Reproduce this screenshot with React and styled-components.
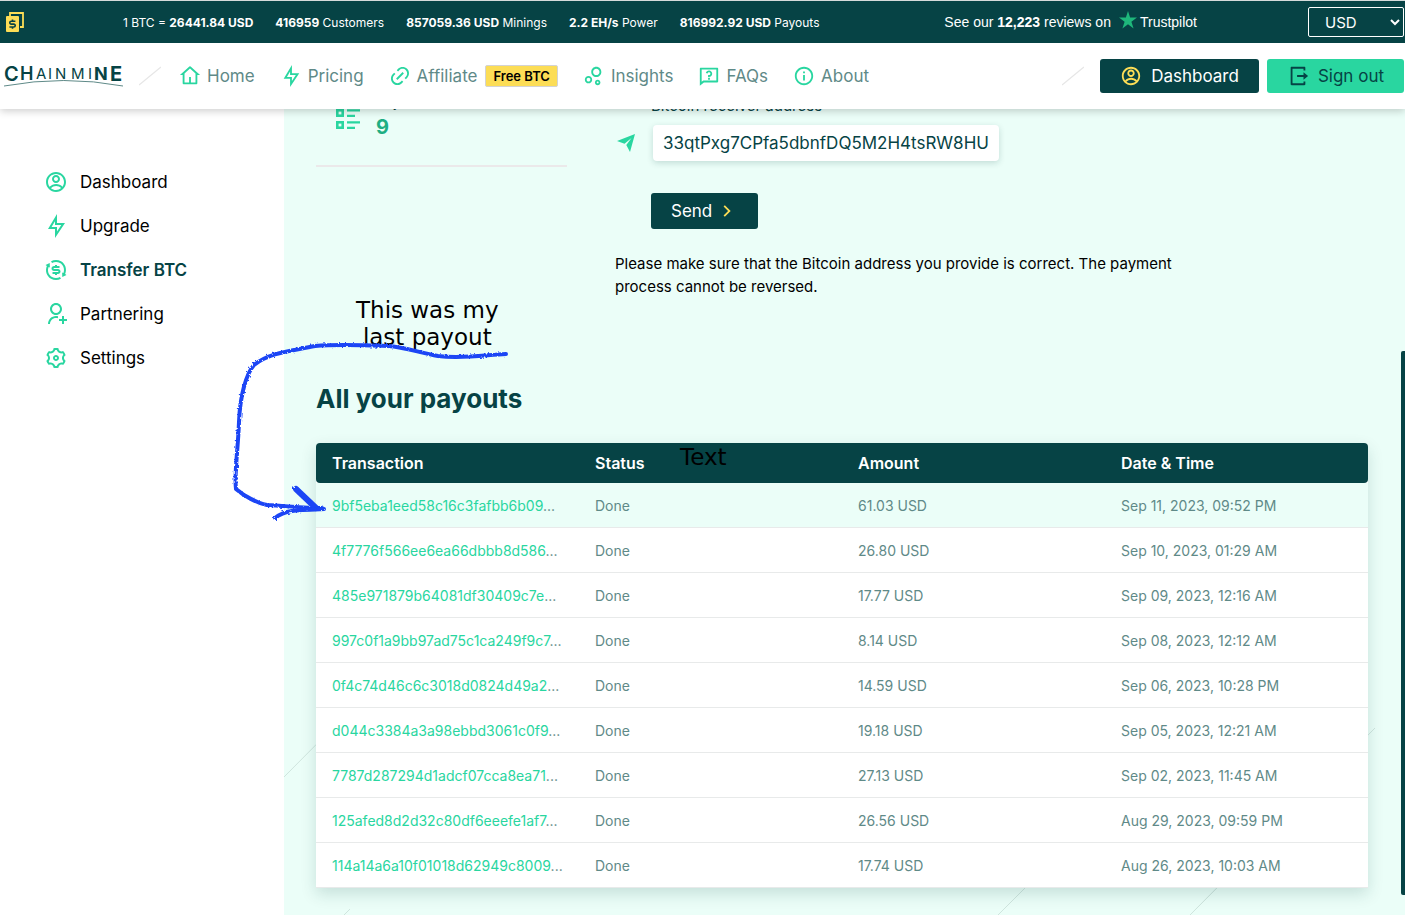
import styled, { createGlobalStyle } from "styled-components";
import {
  RiAccountCircleLine,
  RiBubbleChartLine,
  RiExchangeDollarLine,
  RiFlashlightLine,
  RiInformationLine,
  RiLink,
  RiLogoutBoxRLine,
  RiQuestionnaireLine,
  RiSettings3Line,
  RiUserAddLine,
  RiArrowRightSLine,
} from "react-icons/ri";

const dark = "#064345";
const green = "#29d6a0";
const muted = "#5f8a88";
const yellow = "#fcdd56";
const mint = "#ebfef8";

const stats = [
  { before: "1 BTC = ", value: "26441.84 USD", after: "" },
  { before: "", value: "416959", after: " Customers" },
  { before: "", value: "857059.36 USD", after: " Minings" },
  { before: "", value: "2.2 EH/s", after: " Power" },
  { before: "", value: "816992.92 USD", after: " Payouts" },
];

const navItems = [
  { label: "Home", icon: HomeIcon },
  { label: "Pricing", icon: RiFlashlightLine },
  { label: "Affiliate", icon: RiLink, badge: "Free BTC" },
  { label: "Insights", icon: RiBubbleChartLine },
  { label: "FAQs", icon: RiQuestionnaireLine },
  { label: "About", icon: RiInformationLine },
];

const sideItems = [
  { label: "Dashboard", icon: RiAccountCircleLine },
  { label: "Upgrade", icon: RiFlashlightLine },
  { label: "Transfer BTC", icon: RiExchangeDollarLine, active: true },
  { label: "Partnering", icon: RiUserAddLine },
  { label: "Settings", icon: RiSettings3Line },
];

const payouts = [
  ["9bf5eba1eed58c16c3fafbb6b09", "61.03 USD", "Sep 11, 2023, 09:52 PM"],
  ["4f7776f566ee6ea66dbbb8d586", "26.80 USD", "Sep 10, 2023, 01:29 AM"],
  ["485e971879b64081df30409c7e", "17.77 USD", "Sep 09, 2023, 12:16 AM"],
  ["997c0f1a9bb97ad75c1ca249f9c7", "8.14 USD", "Sep 08, 2023, 12:12 AM"],
  ["0f4c74d46c6c3018d0824d49a2", "14.59 USD", "Sep 06, 2023, 10:28 PM"],
  ["d044c3384a3a98ebbd3061c0f9", "19.18 USD", "Sep 05, 2023, 12:21 AM"],
  ["7787d287294d1adcf07cca8ea71", "27.13 USD", "Sep 02, 2023, 11:45 AM"],
  ["125afed8d2d32c80df6eeefe1af7", "26.56 USD", "Aug 29, 2023, 09:59 PM"],
  ["114a14a6a10f01018d62949c8009", "17.74 USD", "Aug 26, 2023, 10:03 AM"],
];

function HomeIcon(props) {
  return (
    <svg viewBox="0 0 24 24" width="1em" height="1em" fill="currentColor" {...props}>
      <path d="M19 21H5a1 1 0 0 1-1-1v-9H1l10.327-9.388a1 1 0 0 1 1.346 0L23 11h-3v9a1 1 0 0 1-1 1zm-6-2h5V9.157l-6-5.454-6 5.454V19h5v-6h2v6z" />
    </svg>
  );
}

function PlaneIcon() {
  return (
    <svg viewBox="0 0 22 22" fill="currentColor">
      <path d="M20 2L2 9l7.5 2.8L16.5 6l-5.2 7L15 20z" />
    </svg>
  );
}

function MoneyIcon() {
  return (
    <svg width="18" height="20" viewBox="0 0 18 20">
      <path d="M4 1h13v14h-3" fill="none" stroke={yellow} strokeWidth="1.8" />
      <path d="M4 0v4" stroke={yellow} strokeWidth="1.8" />
      <rect x="0" y="4" width="13" height="16" rx="1" fill={yellow} />
      <path
        d="M9.4 9.2H5.2a1.4 1.4 0 0 0 0 2.9h2.6a1.4 1.4 0 0 1 0 2.9H3.4M6.5 7.4v1.8M6.5 15v1.8"
        fill="none"
        stroke={dark}
        strokeWidth="1.6"
      />
    </svg>
  );
}

function Logo() {
  return (
    <svg width="120" height="36" viewBox="0 -6 120 36" role="img" aria-label="Chainmine">
      <g fill={dark} fontFamily="Inter, sans-serif">
        <text y="17" fontSize="20" fontWeight="600">
          <tspan x="0">C</tspan>
          <tspan x="16" y="16" fontSize="18">H</tspan>
        </text>
        <text y="15" fontSize="15" fontWeight="400">
          <tspan x="32">A</tspan>
          <tspan x="44">I</tspan>
          <tspan x="51">N</tspan>
          <tspan x="67">M</tspan>
          <tspan x="84">I</tspan>
        </text>
        <text y="16" fontSize="18" fontWeight="700">
          <tspan x="90">N</tspan>
          <tspan x="106" y="17" fontSize="20">E</tspan>
        </text>
      </g>
      <path d="M0 22Q60 11 119 22" fill="none" stroke={muted} strokeWidth="1" />
    </svg>
  );
}

function Slash() {
  return (
    <svg width="22" height="20" viewBox="0 0 22 20">
      <path d="M0 19L22 1" stroke="#e6e6e6" strokeWidth="1.3" />
    </svg>
  );
}

function ListIcon() {
  return (
    <svg width="24" height="32" viewBox="0 0 24 32" fill="none" stroke={green}>
      {[0, 12, 24].map((y) => (
        <g key={y}>
          <rect x="1.3" y={y + 1.3} width="5.4" height="5.4" strokeWidth="2.6" />
          <path d={`M11 ${y + 1.3}h13M11 ${y + 6.8}h8`} strokeWidth="2.2" />
        </g>
      ))}
    </svg>
  );
}

export default function App() {
  return (
    <Page>
      <GlobalStyle />
      <Header>
        <TopBar>
          <MoneyIcon />
          <Stats>
            {stats.map((s) => (
              <li key={s.value}>
                {s.before}
                <b>{s.value}</b>
                {s.after}
              </li>
            ))}
          </Stats>
          <Reviews href="#reviews">
            <span>
              See our <b>12,223</b> reviews on
            </span>
            <svg width="18" height="18" viewBox="0 0 18 18">
              <path d="M9 0l2.1 6.6H18l-5.6 4.1 2.2 6.7L9 13.3l-5.6 4.1 2.2-6.7L0 6.6h6.9z" fill="#1eb77b" />
            </svg>
            <span>Trustpilot</span>
          </Reviews>
          <Currency aria-label="Currency" defaultValue="USD">
            <option>USD</option>
            <option>EUR</option>
            <option>GBP</option>
          </Currency>
        </TopBar>
        <NavBar>
          <Logo />
          <Slash />
          <NavList>
            {navItems.map(({ label, icon: Icon, badge }) => (
              <NavLink href={`#${label.toLowerCase()}`} key={label}>
                <Icon />
                {label}
                {badge && <Badge>{badge}</Badge>}
              </NavLink>
            ))}
          </NavList>
          <Slash />
          <Actions>
            <ActionButton type="button" $primary>
              <RiAccountCircleLine />
              Dashboard
            </ActionButton>
            <ActionButton type="button">
              <RiLogoutBoxRLine />
              Sign out
            </ActionButton>
          </Actions>
        </NavBar>
      </Header>

      <Body>
        <Sidebar>
          {sideItems.map(({ label, icon: Icon, active }) => (
            <SideLink href="#account" key={label} $active={active} aria-current={active ? "page" : null}>
              <Icon />
              {label}
            </SideLink>
          ))}
        </Sidebar>
        <Panel>
          <BackLines>
            <path d="M0 692L240 450M1091 643L906 830M741 803L700 844M933 803L892 844M66 824L40 850" />
          </BackLines>
          <Top>
            <div>
              <Summary>
                <ListIcon />
                <div>
                  <SummaryLabel>Payouts</SummaryLabel>
                  <SummaryValue>9</SummaryValue>
                </div>
              </Summary>
            </div>
            <TransferForm onSubmit={(e) => e.preventDefault()}>
              <Label htmlFor="address">Bitcoin receiver address</Label>
              <PlaneIcon />
              <AddressInput id="address" defaultValue="33qtPxg7CPfa5dbnfDQ5M2H4tsRW8HU" />
              <SendButton type="submit">
                Send
                <RiArrowRightSLine />
              </SendButton>
              <Hint>
                Please make sure that the Bitcoin address you provide is correct. The payment process cannot be
                reversed.
              </Hint>
            </TransferForm>
          </Top>
          <Title>All your payouts</Title>
          <Table>
            <thead>
              <tr>
                <th>Transaction</th>
                <th>Status</th>
                <th>Amount</th>
                <th>Date &amp; Time</th>
              </tr>
            </thead>
            <tbody>
              {payouts.map(([hash, amount, date]) => (
                <tr key={hash}>
                  <td>
                    <a href={`#${hash}`}>{hash}</a>...
                  </td>
                  <td>Done</td>
                  <td>{amount}</td>
                  <td>{date}</td>
                </tr>
              ))}
            </tbody>
          </Table>
        </Panel>
      </Body>

      <ScrollThumb />
      <Pen viewBox="0 0 300 200">
        <filter id="rough">
          <feTurbulence type="fractalNoise" baseFrequency="0.5" numOctaves="2" />
          <feDisplacementMap in="SourceGraphic" scale="3" />
        </filter>
        <g filter="url(#rough)">
          <path
            d="M276 24C255 25 232 29 208 26C190 23 175 17 158 16C130 15 108 14 85 16C62 21 40 22 24 35C16 44 10 66 9 92C8 120 4 145 6 159C14 166 27 173 37 175C57 176 75 178 92 178"
            strokeWidth="4"
          />
          <path d="M66 159L86 178" strokeWidth="6" />
          <path d="M45 188C55 180 66 180 94 179" strokeWidth="4" />
        </g>
      </Pen>
      <Note>
        This was my
        <br />
        last payout
      </Note>
      <StrayNote>Text</StrayNote>
    </Page>
  );
}

const GlobalStyle = createGlobalStyle`
  * {
    box-sizing: border-box;
  }

  body {
    margin: 0;
    font-family: Inter, sans-serif;
    font-size: 16px;
    color: #000;
  }

  a {
    text-decoration: none;
  }

  button, input, select {
    font-family: inherit;
  }

  svg {
    flex-shrink: 0;
  }
`;

const Page = styled.div`
  position: relative;
  display: flex;
  flex-direction: column;
  height: 100vh;
  overflow: hidden;
`;

const Header = styled.header`
  position: sticky;
  top: 0;
  z-index: 2;
  background: #fff;
  box-shadow: 0 2px 8px rgba(0, 0, 0, 0.2);
`;

const TopBar = styled.div`
  display: flex;
  align-items: center;
  height: 43px;
  padding: 0 1px 0 6px;
  border-top: 1px solid #d5dbdb;
  background: ${dark};
  color: #fff;
`;

const Stats = styled.ul`
  display: flex;
  gap: 22px;
  margin: 0 auto 0 99px;
  padding: 0;
  list-style: none;
  font-size: 12px;
  white-space: nowrap;
`;

const Reviews = styled.a`
  display: flex;
  align-items: center;
  margin-right: 111px;
  color: #fff;
  font-family: "Liberation Sans", Arial, sans-serif;
  font-size: 14px;
  white-space: nowrap;

  svg {
    margin: 0 3px 4px 8px;
  }
`;

const Currency = styled.select`
  width: 96px;
  height: 30px;
  padding-left: 12px;
  border: 1px solid #fff;
  border-radius: 2px;
  background: ${dark};
  color: #fff;
  font-size: 15px;
`;

const NavBar = styled.div`
  display: flex;
  align-items: center;
  height: 66px;
  padding: 0 1px 0 4px;

  > svg + svg {
    margin: 0 18px 0 15px;
  }
`;

const NavList = styled.nav`
  display: flex;
  flex: 1;
  gap: 25px;
`;

const NavLink = styled.a`
  display: flex;
  align-items: center;
  gap: 6px;
  color: ${muted};
  font-size: 17px;

  svg {
    width: 22px;
    height: 22px;
    color: ${green};
  }
`;

const Badge = styled.span`
  margin-left: 2px;
  padding: 0 7px;
  border: 1px solid #d3d3d3;
  border-radius: 2px;
  background: ${yellow};
  color: #000;
  font-size: 13px;
  font-weight: 600;
  line-height: 20px;
`;

const Actions = styled.div`
  display: flex;
  gap: 8px;
  margin-left: 16px;
`;

const ActionButton = styled.button`
  display: flex;
  align-items: center;
  gap: 9px;
  height: 34px;
  padding: 0 20px;
  border: none;
  border-radius: 3px;
  background: ${({ $primary }) => ($primary ? dark : green)};
  color: ${({ $primary }) => ($primary ? "#fff" : dark)};
  font-size: 17px;
  cursor: pointer;

  svg {
    width: 22px;
    height: 22px;
    color: ${({ $primary }) => ($primary ? yellow : dark)};
  }
`;

/* the page is scrolled, its first lines run under the header */
const Body = styled.div`
  display: flex;
  flex: 1;
  margin-top: -24px;
`;

const Sidebar = styled.aside`
  width: 284px;
  flex-shrink: 0;
  padding: 75px 44px;
  background: #fff;
`;

const SideLink = styled.a`
  display: flex;
  align-items: center;
  gap: 12px;
  height: 44px;
  color: ${({ $active }) => ($active ? dark : "#000")};
  font-size: 17px;
  font-weight: ${({ $active }) => ($active ? 600 : 400)};

  svg {
    width: 24px;
    height: 24px;
    color: ${green};
  }
`;

const Panel = styled.main`
  position: relative;
  flex: 1;
  padding: 0 37px 0 32px;
  background: ${mint};
`;

const BackLines = styled.svg`
  position: absolute;
  top: 0;
  left: 0;
  width: 100%;
  height: 100%;
  fill: none;
  stroke: #cfe5de;
`;

const Top = styled.div`
  position: relative;
  display: grid;
  grid-template-columns: 251px 1fr;
  gap: 48px;
`;

const Summary = styled.div`
  display: flex;
  align-items: flex-end;
  gap: 16px;
  padding: 5px 20px 25px;
  border-bottom: 2px solid #ebe9ea;

  svg {
    margin-bottom: 11px;
  }
`;

const SummaryLabel = styled.div`
  color: ${dark};
  font-size: 14px;
  line-height: 24px;
`;

const SummaryValue = styled.div`
  color: #1fae83;
  font-size: 20px;
  font-weight: 700;
  line-height: 26px;
`;

const TransferForm = styled.form`
  display: grid;
  grid-template-columns: 24px 348px;
  column-gap: 12px;
  align-content: start;
  align-items: center;
  justify-items: start;
  padding-top: 11px;

  > svg {
    width: 22px;
    height: 22px;
    margin-top: 9px;
    color: ${green};
  }
`;

const Label = styled.label`
  grid-column: 2;
  color: ${dark};
  font-size: 15px;
  line-height: 20px;
`;

const AddressInput = styled.input`
  width: 346px;
  height: 36px;
  margin: 9px 2px 0;
  padding: 0 10px;
  border: none;
  border-radius: 4px;
  background: #fff;
  box-shadow: 0 2px 6px rgba(6, 67, 69, 0.18);
  color: ${dark};
  font-size: 17px;
`;

const SendButton = styled.button`
  grid-column: 2;
  display: flex;
  align-items: center;
  gap: 4px;
  height: 36px;
  margin-top: 32px;
  padding: 0 20px;
  border: none;
  border-radius: 3px;
  background: ${dark};
  color: #fff;
  font-size: 17px;
  cursor: pointer;

  svg {
    width: 22px;
    height: 22px;
    color: ${yellow};
  }
`;

const Hint = styled.p`
  grid-column: 1 / -1;
  width: 570px;
  margin: 23px 0 0;
  font-size: 15px;
  line-height: 23px;
`;

const Title = styled.h2`
  position: relative;
  margin: 85px 0 28px;
  color: ${dark};
  font-size: 26px;
  line-height: 32px;
`;

const Table = styled.table`
  position: relative;
  width: 100%;
  table-layout: fixed;
  border-spacing: 0;
  background: #fff;
  border-radius: 4px 4px 0 0;
  box-shadow: 0 6px 16px rgba(6, 67, 69, 0.16);
  text-align: left;
  white-space: nowrap;

  th {
    height: 40px;
    padding: 0 16px;
    background: ${dark};
    color: #fff;
    font-size: 16px;
    font-weight: 600;
  }

  th:first-child {
    border-radius: 4px 0 0 4px;
  }

  th:last-child {
    border-radius: 0 4px 4px 0;
  }

  td {
    height: 45px;
    padding: 0 16px;
    border-bottom: 1px solid #e8eaea;
    color: ${muted};
    font-size: 14px;
  }

  tbody tr:first-child {
    background: ${mint};
  }

  a {
    color: ${green};
  }
`;

const ScrollThumb = styled.div`
  position: absolute;
  top: 351px;
  right: 0;
  z-index: 1;
  width: 4px;
  height: 544px;
  border-radius: 2px 0 0 2px;
  background: ${dark};
`;

const Pen = styled.svg`
  position: absolute;
  top: 330px;
  left: 230px;
  z-index: 3;
  width: 300px;
  height: 200px;
  fill: none;
  stroke: #1a45f5;
  stroke-linecap: round;
  stroke-linejoin: round;
  pointer-events: none;
`;

const Note = styled.div`
  position: absolute;
  top: 297px;
  left: 356px;
  z-index: 2;
  color: #000;
  font-family: "DejaVu Sans", Verdana, sans-serif;
  font-size: 23px;
  line-height: 27px;
  text-align: center;
`;

const StrayNote = styled(Note)`
  top: 444px;
  left: 680px;
`;
